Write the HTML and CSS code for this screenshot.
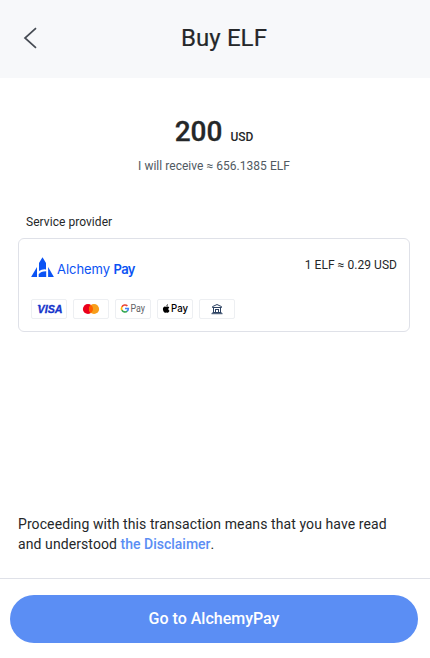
FILE: index.html
```html
<!DOCTYPE html>
<html lang="en">
<head>
<meta charset="utf-8">
<title>Buy ELF</title>
<link rel="stylesheet" href="styles.css">
</head>
<body>
<div class="page">
  <header class="header">
    <button class="back" aria-label="Back">
      <svg width="14" height="22" viewBox="0 0 14 22" fill="none" stroke="#464b53" stroke-width="1.7"><path d="M13 1.2 2 11l11 9.8"/></svg>
    </button>
    <h1 class="title">Buy ELF</h1>
  </header>
  <main class="content">
    <section class="summary">
      <div class="amount"><span class="value">200</span><span class="currency">USD</span></div>
      <div class="receive">I will receive ≈ 656.1385 ELF</div>
    </section>
    <section class="provider">
      <h2 class="label">Service provider</h2>
      <div class="card">
        <div class="card-top">
          <svg class="logo" width="106" height="24" viewBox="0 0 106 24">
            <g fill="#0b53f4">
              <path d="M11.5 1.2 15 7V13.4Q11.3 12.8 8 15V7Z"/>
              <path d="M6 11V21H0.1Z"/>
              <path d="M17.1 11 22.9 21H17.1Z"/>
              <path d="M7.7 21V18.5Q9.5 15.3 15.2 15.3V21Z"/>
            </g>
            <text class="logo-name" x="26" y="18" textLength="53">Alchemy</text>
            <text class="logo-pay" x="82.5" y="18" textLength="22">Pay</text>
          </svg>
          <span class="rate">1 ELF ≈ 0.29 USD</span>
        </div>
        <div class="methods">
          <span class="method"><svg width="34" height="18" viewBox="0 0 34 18"><path d="M5 5h3l1 2.5Q7.500 5.600 5 5Z" fill="#1434cb"/><text class="visa" x="5.6" y="13" textLength="25" lengthAdjust="spacingAndGlyphs">VISA</text></svg></span>
          <span class="method"><svg width="34" height="18" viewBox="0 0 34 18"><circle cx="14" cy="9" r="5.1" fill="#eb001b"/><circle cx="20" cy="9" r="5.1" fill="#f79e1b"/><path d="M17 4.900a5.100 5.100 0 0 1 0 8.200 5.100 5.100 0 0 1 0-8.200Z" fill="#ff5f00"/></svg></span>
          <span class="method"><svg width="34" height="18" viewBox="0 0 34 18"><g fill="none" stroke-width="1.600"><path d="M11.400 5.900A3.500 3.500 0 0 0 5.900 6.800" stroke="#ea4335"/><path d="M5.900 6.800a3.600 3.600 0 0 0 0 3.300" stroke="#fbbc04"/><path d="M5.900 10.100a3.500 3.500 0 0 0 5.400 1" stroke="#34a853"/><path d="M11.300 11.100q1-1 1-2.600H9" stroke="#4285f4"/></g><text class="gpay" x="14.500" y="12.300" textLength="14.500" lengthAdjust="spacingAndGlyphs">Pay</text></svg></span>
          <span class="method"><svg width="34" height="18" viewBox="0 0 34 18"><path d="M8.500 6.200c.8-.1 1.400-.8 1.400-1.900-1 .2-1.500.9-1.400 1.900ZM8.400 6.800c-.5 0-.9-.3-1.500-.3-1 0-2 .9-2 2.600 0 1.900 1.100 3.600 2 3.600.5 0 .8-.3 1.400-.3s.9.3 1.400.3c.8 0 1.400-1.100 1.800-2-1.500-.7-1.600-2.500-.2-3.300-.9-1.200-2-.9-2.900-.6Z"/><text class="apay" x="13" y="12.300" textLength="17" lengthAdjust="spacingAndGlyphs">Pay</text></svg></span>
          <span class="method"><svg width="34" height="18" viewBox="0 0 34 18" fill="none" stroke="#2d4262" stroke-width="1"><path d="M12.500 7.500V6.600L17 4.500l4.500 2.100v.9Zm1 .5v4.500M15.500 9.500v2.500M18.500 9.500v2.500M20.500 8v4.500M15 9.500h4M12.500 12.500h9M11.500 13.700h11"/></svg></span>
        </div>
      </div>
    </section>
    <p class="disclaimer">Proceeding with this transaction means that you have read<br>and understood <a class="link">the Disclaimer</a>.</p>
  </main>
  <footer class="footer"><button class="submit">Go to AlchemyPay</button></footer>
</div>
</body>
</html>
```
FILE: styles.css
```css
* { box-sizing: border-box; }
body { margin: 0; font-family: Roboto, sans-serif; color: #252729; background: #fff; }
button { font: inherit; border: 0; padding: 0; background: none; }
svg { display: block; }
.page { height: 658px; display: flex; flex-direction: column; }
.header { height: 78px; flex: none; display: grid; grid-template-columns: 38px 1fr 20px; align-items: center; padding-bottom: 2px; background: #f7f8fa; }
.back { justify-self: end; margin-right: 1px; }
.title { margin: 0; font-size: 24px; line-height: 32px; font-weight: 400; text-align: center; letter-spacing: .1px; -webkit-text-stroke: .2px; }
.content { flex: 1; display: flex; flex-direction: column; padding: 35px 20px 24px 18px; }
.summary { text-align: center; }
.amount { display: flex; justify-content: center; align-items: baseline; gap: 8px; line-height: 38px; }
.value { font-size: 28px; font-weight: 500; -webkit-text-stroke: .3px; }
.currency { font-size: 12px; font-weight: 500; }
.receive { margin-top: 1px; font-size: 12px; line-height: 18px; letter-spacing: .03px; color: #515a62; }
.provider { margin-top: 39px; }
.label { margin: 0 0 7px 8px; font-size: 12px; line-height: 17px; font-weight: 400; letter-spacing: .05px; }
.card { height: 94px; padding: 16px 12px 12px; border: 1px solid #dfe1e8; border-radius: 6px; display: flex; flex-direction: column; justify-content: space-between; }
.card-top { display: flex; justify-content: space-between; }
.rate { font-size: 12px; line-height: 20px; letter-spacing: .05px; }
.logo { margin-top: 1px; }
.logo-name, .logo-pay { font-family: Inter, sans-serif; font-size: 13px; fill: #0b53f4; }
.logo-pay { font-weight: 600; }
.methods { display: flex; gap: 6px; }
.method { width: 36px; height: 20px; border: 1px solid #edeff2; border-radius: 2px; }
.visa { font: italic 700 11px "Liberation Sans", sans-serif; fill: #1434cb; stroke: #1434cb; stroke-width: .3px; }
.gpay { font: 400 10px Roboto, sans-serif; fill: #5f6368; }
.apay { font: 500 10px Inter, sans-serif; fill: #000; }
.disclaimer { margin: auto 0 0; font-size: 14px; line-height: 20px; letter-spacing: .09px; }
.link { color: #5b8ef4; font-weight: 500; letter-spacing: 0; }
.footer { height: 80px; flex: none; padding: 16px 12px 16px 10px; border-top: 1px solid #dfe1e8; }
.submit { width: 100%; height: 48px; padding-bottom: 2px; border-radius: 24px; background: #5b8ef4; color: #fff; font-size: 16px; font-weight: 500; }
```
